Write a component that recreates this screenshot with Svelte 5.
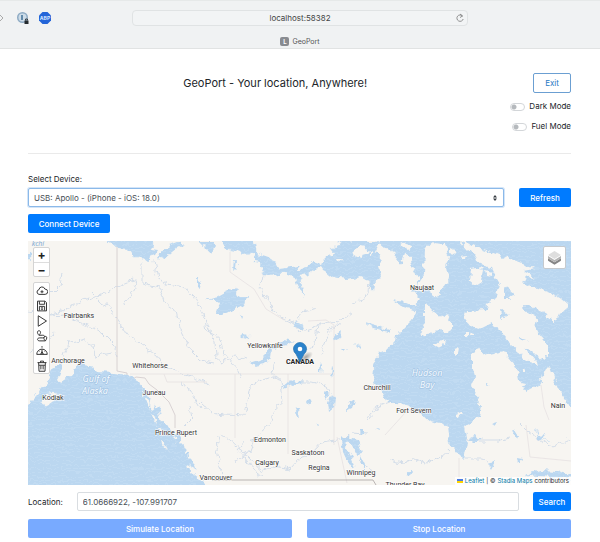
<script>
  let device = $state('apollo');
  let location = $state('61.0666922, -107.991707');
  let address = $state('localhost:58382');
  let dark = $state(false);
  let fuel = $state(false);

  const places = [
    ['Fairbanks', 79, 318], ['Anchorage', 68, 363], ['Whitehorse', 150, 368],
    ['Kodiak', 53, 400], ['Juneau', 154, 395], ['Prince Rupert', 176, 435],
    ['Yellowknife', 265, 348], ['Edmonton', 270, 442], ['Saskatoon', 308, 455],
    ['Calgary', 267, 465], ['Regina', 319, 470], ['Winnipeg', 361, 475],
    ['Vancouver', 216, 480], ['Churchill', 377, 390], ['Naujaat', 422, 290],
    ['Fort Severn', 414, 413], ['Nain', 558, 408], ['Thunder Bay', 405, 487]
  ];

  const rivers = [
    'M28 312l20 3 14-4 18-10 24-7 16-9 14-6q6 2-2 13l-8 12',
    'M50 315l14-1 12 7 12 4 14 8 12 12 3 12',
    'M92 293l8 9 9 5 10 14 6 12 15 10 14 11 12 14 18 6 26 10',
    'M62 272l-2 14-8 8M30 352l12-4 12-17M64 356l5-14 15-2 10 6 2 10 16-3',
    'M154 261l4 17 8 6 18 3 10 9 10 19 3 15 13 8 3 14 14 17 4 9',
    'M142 262v22l18 4 4 14 12 8 4 18 12 24 8 8 14 3',
    'M201 315l8 10 6 18 1 14 6 5 12-6 14 4',
    'M263 274l-3 15 8 10 8 15 18 10 4 9 30-12 11 1 13-10',
    'M295 323l9-11 13-4M352 303l12-3 4-7 1-14M275 362l-4 10 10 8 2 22-8 6-6 18-14 12-6 16-16 8',
    'M200 402l14 13 12-1 18 1 6-28 13-8 12-2 6 4',
    'M244 452l10 12 8 7 12-5 16 3 10-11 9-2 12-14 24-3 6-6 17 1',
    'M219 435l-2 14 5 28M221 434l18 14 16 24 8 5M245 440l-8 10 11 12',
    'M318 324l-2 20-12 7M320 354l9-23 7-6 6 1M366 420l8-9 2-4 14-5',
    'M388 460l16 3 12-4 9 4 15-5 9-8M463 438l15 3 20 0 12-3M465 459h18l6 3',
    'M288 382l24 0 12 3 6 10 1 14M520 424l6 6 10 8 18 10 12-8 5 1',
    'M180 383l8 5 12 20M182 428l10-10-2-10M360 462l10 6 5 10'
  ];

  const lakes = [
    'M206 299l12-3 7-4 13-5-3 6 5 3 8 0-2 9-7 4-4-3-4 5-7 4-9 0 1-7 5-4-7-4z',
    'M249 363l13-4 5-9 8-5 10-5 11 2-15 3-9 5-1 8-5 6-12 2z',
    'M281 389l7-6 6-3 9 2-10 3-7 2z', 'M332 393l3 5-1 9-5 4-1-8z', 'M324 391l4 4-1 4-3-3z',
    'M305 402l5-2 1 3-5 1z', 'M294 410l4-1 1 10-3-4z', 'M348 405l8-5-2 7-6 3z', 'M316 424l3-1-2 5z',
    'M296 322l7 3 2 4-10-2z', 'M240 311l3 5-1 2z', 'M241 333l6 2 3 4-8-2z', 'M334 337l7-5-1 6-5 4z',
    'M341 349l7-1-4 4zM354 343l5 2 0 3z', 'M365 322l10 3 15 5-2 2-15-4z', 'M235 260l2 0-1 8-2 2z',
    'M340 436l5 3 3-3 4 2 6 1 4 15-5 1-5-9-4-5-1 9 5 9 3 9-6-4-6-13z', 'M361 456l4 8 0 5-4-6z',
    'M197 278l4 6-1 5-3-2z', 'M205 297l4 2-3 1z', 'M407 471l4 0-1 6-3-1z',
    'M470 438l7-3-1 4 7 0-8 4zM487 383l4 2-4 1zM492 424l7-2-4 4z', 'M512 430l7 5-2 5-4-6z',
    'M517 457l5 1-2 6-2-1zM490 461l6-1-5 9z', 'M525 475l16-5 16 1 14 4v5l-20-3z',
    'M536 427l3 8 6-1-3 5 10 2-14-1z', 'M360 429l3 0 0 5-2 1z', 'M376 429l4-2 0 3z',
    'M320 362l2 4-1 7-2-4z', 'M332 367l2 7-1 4-2-3z', 'M28 252l4 3-2 4-2-1z'
  ];

  const islands = [
    'M425 249l8-6 12 1 4 13-3 10 3 12-8 12-4 6-10-7-13 1 10-16z',
    'M425 302l7 9 12 6 3-1 6 9 0 4-7 4-4-3-10 1-5 6-6-4 4-15z',
    'M435 345l6-5 4 1-3 5-6 3zM455 349l4-2-1 7-3 2z',
    'M472 269l8-2 4 4-2 10-6 4-5-4zM486 271l6 2 0 3-5-1z',
    'M459 240l9 10 7 5 5 9 11 3 6 13 3 5-3 10-10 10-2 5-14 1-5 0-1 7 6 8 9 3 10-5 9 5 7 9 4 8 14 12 14 9-1-5-13-15 15 9 8 2 0-14-8-10-4-9 2-6-12-7-1-8 11 4 8 3 5 7 7 5 2-7 7-4 4-7-8-7-10-5-8-3-10-4-8-3 2-5 8-2-10-5 11-2-8-4z',
    'M465 332l4 0 0 4-4 0zM471 331l3 1-1 3-3 0z',
    'M400 245l8-2 5 3-4 3zM450 248l7 4-3 3-4-1zM460 256l6-1-1 4-4 0z',
    'M538 344l4 1 0 4-3 0zM537 353l4 2-2 3zM521 368l3 0-1 4-2 0z',
    'M458 413l4-2 0 3-4 5zM446 445l5 1 0 3-5-1z', 'M541 372l2 7-3 2z'
  ];

  const tools = [
    ['Load', 'M4 12.500a3.200 3.200 0 0 1 0-6.300 4 4 0 0 1 7.800-.8 3.400 3.400 0 0 1 .4 7.100zM8 7v4M6 9h4'],
    ['Save', 'M2 1.500h10l2 2v11H2zM4.500 1.700v4h7v-4M4.500 14V8.500h7V14M6.500 10.500h3M6.500 12.300h3'],
    ['Play', 'M3 1L14 8 3 15z'],
    ['Route', 'M4 7C1 4 1.500 1 4 1s3 3 0 6zM4 7h5c3.500 0 3.500 3.500 0 3.500H5c-4 0-4 4 0 4h7.500M12.500 14.500c-3-3-2.500-6 0-6s2.500 3 0 6z'],
    ['Speed', 'M1 12.500a7 7 0 0 1 14 0zM8 12.500V6M8 3.500v-2M3.500 7.500l1 1M12.500 7.500l-1 1M6 12.500l2-3.500 2 3.500'],
    ['Delete', 'M2 3.500h12M6 3.500v-2h4v2M3.500 3.500L4 15h8l.5-11.500M4 7h8M6.500 7.500v5M9.500 7.500v5']
  ];
</script>

<div class="window">
  <header class="chrome">
    <div class="extensions">
      <svg class="arrow" viewBox="0 0 4 8" aria-hidden="true"><path d="M0 1l3 3-3 3" /></svg>
      <svg class="ext" viewBox="0 0 14 14" aria-hidden="true">
        <circle cx="6.500" cy="6.500" r="5.500" fill="#8eabc4" />
        <circle cx="6.500" cy="6.500" r="4" fill="#cddce8" />
        <path d="M5 4h2v5H5z" fill="#628bab" />
        <path d="M8.500 9.500h4v3.500h-4z" fill="#242a2e" /><path d="M9.500 9.500V8h2v1.500" fill="none" stroke="#242a2e" stroke-width=".8" />
      </svg>
      <svg class="ext" viewBox="0 0 14 14" aria-hidden="true">
        <path d="M4.500 1h5L13 4.500v5L9.500 13h-5L1 9.500v-5z" fill="#2465d8" />
        <text x="7" y="9" text-anchor="middle" font-size="5" font-weight="700" fill="#d9e8ff">ABP</text>
      </svg>
    </div>
    <div class="address">
      <input aria-label="Address" bind:value={address} />
      <button class="reload" aria-label="Reload">
        <svg viewBox="0 0 10 10"><path d="M7.500 3A3.200 3.200 0 1 0 8.200 6M5 1l2.500 2L5 4.500" /></svg>
      </button>
    </div>
    <div class="tab"><span class="favicon">L</span><span>GeoPort</span></div>
  </header>

  <main>
    <section class="top">
      <h1>GeoPort - Your location, Anywhere!</h1>
      <div class="options">
        <button class="outline">Exit</button>
        <label class="switch"><input type="checkbox" bind:checked={dark} />Dark Mode</label>
        <label class="switch"><input type="checkbox" bind:checked={fuel} />Fuel Mode</label>
      </div>
    </section>

    <label class="caption" for="device">Select Device:</label>
    <div class="device-row">
      <div class="select">
        <select id="device" bind:value={device}>
          <option value="apollo">USB: Apollo - (iPhone - iOS: 18.0)</option>
        </select>
        <svg viewBox="0 0 4 6" aria-hidden="true"><path d="M0 2.500L2 0l2 2.500zM0 3.500h4L2 6z" /></svg>
      </div>
      <button class="primary">Refresh</button>
    </div>
    <button class="primary connect">Connect Device</button>

    <section class="map" aria-label="Map">
      <svg class="canvas" viewBox="28 241 543 244" preserveAspectRatio="xMidYMid slice">
        <defs>
          <pattern id="sea" width="6" height="4" patternUnits="userSpaceOnUse">
            <path d="M0 0h6v4H0z" fill="#bbd7f0" /><path d="M0 0h6v1H0z" fill="#c1dbf2" />
          </pattern>
          <filter id="coast" filterUnits="userSpaceOnUse" x="20" y="233" width="560" height="260">
            <feTurbulence type="fractalNoise" baseFrequency="0.16" numOctaves="2" seed="4" />
            <feDisplacementMap in="SourceGraphic" scale="8" xChannelSelector="R" yChannelSelector="G" />
          </filter>
          <radialGradient id="shade"><stop offset="0" stop-color="#555" stop-opacity=".5" /><stop offset="1" stop-color="#555" stop-opacity="0" /></radialGradient>
        </defs>
        <path d="M28 241h543v244H28z" fill="#f7f5f1" />
        <g class="river" filter="url(#coast)">{#each rivers as d}<path {d} />{/each}</g>
        <g class="border">
          <path d="M117 241v130l10 2v10l9-6 9 1 4 6 8 6 12 12 6 13v13" />
          <path class="faint" d="M130 374h205M235 374v64M288 374v80M334 325v120M230 252v20l24 17 12 20 18 11M334 325l-8-5-18 1M164 374l3 8h40M459 458v27M337 437l10 46M385 435l20-22 22-11M541 385l3 22 5 13M526 425l4 32 41 4" />
          <path d="M212 480h161l3 5" stroke="#aaa5a5" />
        </g>
        <g filter="url(#coast)">
          <g fill="url(#sea)">
            <path d="M107 233v8l5 3 6 4 10 1 6 7 8 4 4 3 3-6 6-2 3-5-7-1 2-8v-8z" />
            <path d="M159 258l3-6 6-4 1-3 8-3 8 2-8 4-7 6-5 4-3-1-2 3zM196 233v8l18 0 2 5-5 7-4-2-2-7-3 2z" />
            <path d="M222 233v8l1 7 11 2 10 4 9-1 2 9 6 1 2 4-3 6 10 3 14-3 10 3 4 11 6 9-2-12-4-8 10-2 9-7 8 4 8 6 15 2 13-3 8 4 1 8 4 5 1-9 6-9-3-10 5-5-7-8 4-8-6-3-34-1-3 6-8 1 5 7-9 4-4 6-9-3-7 4-13 2-13 2-5-9-17-6-2-11v-8z" />
            <path d="M20 404h8l9-9 8-10 4-10 7-10 7 0-5 14 3 4 12-8 4-11 8 2 9 2 4 4 15 1 7 1 8 1 8 5 5 7 6 3 4 10 6 8 4 1-2 8 8 9 8 11 4-4 3 7-2 3 6 5 2 10 7 7 4 13 10 10 8 5v14H20z" />
            <path d="M377 233v8l8 7 7 1 4 7 4 10 4-12 6 2 3 12 5 10 0 6-6 6 8 8-3 9-12-5-12-2 8 6 14 4-2 10-8 8-9 7-1 7-8 7-9 4-5 14-1 15 9 5 7 15 9 0 13 4 9 7 10 8 11 2 7 3 2 17 8 10 7 7 3-17-3-15 15-12 2-10-3-10-7-10 4-10-3-10 0-14 7-3 10 6 15-3 12 14 2 9 1 5 8 11 6-3 6-3 8-15 3-3 8 22 14 19 7 11h9V233z" />
            {#each lakes as d}<path {d} />{/each}
          </g>
          <g fill="#f7f5f1">
            {#each islands as d}<path {d} />{/each}
            <path d="M297 266l12-6 4 3-5 4-10 3zM41 402l5-8 7-1 8 1-7 5-8 6zM187 464l10 6 12 10 0 4-9-4-11-9zM332 247l5-2-1 4zM338 258l4 0-2 4zM353 250l9-6 7 8-7 2 1 5-7-1zM370 253l3-2 0 4-3 2z" />
            <path d="M140 388l5 6-2 1zM145 396l4 3 0 9-3-5zM151 398l4 6-2 6-4-5zM151 412l4 5 2 8-5-6zM158 413l5 2 3 8-5 0zM158 428l6 2 0 6-5-2zM161 438l4 6 4 8-7-8zM172 436l5 2 0 5z" />
          </g>
          <path fill="url(#sea)" d="M504 286l4 3 7 5-7 5-4 0zM500 308l8 7-7 4 0-5zM425 295l7 3 4 6-6-1-5-4zM519 335l8 6-5-1z" />
        </g>
        <g class="sea-name">
          <text x="96" y="382">Gulf of</text><text x="95" y="394">Alaska</text>
          <text x="427" y="376">Hudson</text><text x="427" y="388">Bay</text>
          <text class="small" x="38" y="246">kchi</text>
        </g>
        <g class="place">
          {#each places as [name, x, y]}<text {x} {y}>{name}</text>{/each}
          <text class="country" x="300" y="364">CANADA</text>
        </g>
        <ellipse cx="306" cy="357" rx="8" ry="4" fill="url(#shade)" transform="rotate(-35 306 357)" />
        <path d="M300 362l-4-8q-2.500-2-2.500-5a6.500 6.500 0 0 1 13 0q0 3-2.500 5z" fill="#2b82cb" stroke="#2471af" stroke-width=".7" />
        <circle cx="300" cy="349" r="2.300" fill="#fff" />
      </svg>

      <div class="controls">
        <div class="bar zoom"><button aria-label="Zoom in">+</button><button aria-label="Zoom out">−</button></div>
        <div class="bar">
          {#each tools as [name, d]}
            <button aria-label={name}><svg viewBox="0 0 16 16"><path {d} /></svg></button>
          {/each}
        </div>
      </div>
      <button class="layers" aria-label="Layers">
        <svg viewBox="0 0 26 26">
          <path d="M5 14l8 5 8-5v3l-8 5-8-5z" fill="#858585" />
          <path d="M5 11l8 5 8-5v3l-8 5-8-5z" fill="#b4b4b4" />
          <path d="M13 5l8 5-8 5-8-5z" fill="#dedede" />
        </svg>
      </button>
      <div class="credit">
        <svg viewBox="0 0 6 4" aria-hidden="true"><path d="M0 0h6v2H0z" fill="#4c7be1" /><path d="M0 2h6v2H0z" fill="#ffd500" /></svg>
        <a href="#leaflet">Leaflet</a> | © <a href="#stadia">Stadia Maps</a> contributors
      </div>
    </section>

    <div class="location-row">
      <label for="location">Location:</label>
      <input id="location" bind:value={location} />
      <button class="primary search">Search</button>
    </div>
    <div class="actions">
      <button class="primary" disabled>Simulate Location</button>
      <button class="primary" disabled>Stop Location</button>
    </div>
  </main>
</div>

<style>
  :global(body) { background: #fff; }
  .window { font: 8px/12px Inter, "Liberation Sans", sans-serif; color: #212529; }
  .window * { box-sizing: border-box; }
  button, input, select { font: inherit; color: inherit; margin: 0; }
  button { padding: 0; border: 0; background: none; cursor: pointer; }
  svg { display: block; }

  .chrome {
    display: grid; grid-template-columns: 1fr 56% 1fr; row-gap: 10px; align-items: center;
    padding-top: 9px; background: #f0f2f3; border-top: 1px solid #e6e9e9; border-bottom: 1px solid #e1e3e3;
  }
  .extensions { display: flex; align-items: center; gap: 8px; }
  .arrow { width: 4px; height: 8px; margin-right: 4px; fill: none; stroke: #aaa; }
  .ext { width: 14px; height: 14px; }
  .address { position: relative; }
  .address input {
    display: block; width: 100%; height: 16px; padding: 0 16px; text-align: center;
    border: 1px solid #e0e3e4; border-radius: 4px; background: #f2f4f5; color: #444; outline: 0;
  }
  .reload { position: absolute; right: 3px; top: 3px; width: 10px; height: 10px; }
  .reload svg { fill: none; stroke: #777; stroke-width: 0.8; }
  .tab { grid-column: 1 / -1; display: flex; justify-content: center; gap: 3px; font-size: 7px; color: #555; }
  .favicon { width: 9px; height: 9px; margin-top: 1px; border-radius: 2px; background: #888b90; color: #fff; font: 700 6px/9px Inter, sans-serif; text-align: center; }

  main { padding: 24px 29px 0 28px; }
  .top { display: flex; align-items: flex-start; padding-bottom: 20px; border-bottom: 1px solid #eaeaea; }
  h1 { flex: 1; margin: 0; padding-left: 12px; font-size: 11px; line-height: 20px; font-weight: 400; text-align: center; }
  .options { display: flex; flex-direction: column; align-items: flex-end; gap: 7px; }
  .outline { width: 38px; height: 20px; border: 1px solid #6b9fd2; border-radius: 2px; color: #287ac4; }
  .switch { display: flex; align-items: center; gap: 4px; line-height: 13px; }
  .switch input { appearance: none; width: 15px; height: 8px; border: 1px solid #d3d6d9; border-radius: 4px; background: radial-gradient(circle at 3px 3px, #b5b9bd 2px, #fff 3px); }
  .switch input:checked { background: #007bff; }

  .caption { display: block; margin: 19px 0 3px; }
  .device-row { display: flex; gap: 15px; }
  .select { position: relative; flex: 1; }
  select {
    appearance: none; display: block; width: 100%; height: 19px; padding: 0 5px; border: 1px solid #8bb9e9;
    border-radius: 2px; background: #fff; color: #495057; box-shadow: 0 0 0 1px #d4e5f8; outline: 0;
  }
  .select svg { position: absolute; right: 7px; top: 7px; width: 4px; height: 6px; fill: #343a40; pointer-events: none; }
  .primary { width: 52px; height: 19px; border-radius: 2px; background: #007bff; color: #fff; font-weight: 500; }
  .connect { display: block; width: 82px; margin: 7px 0 8px; }

  .map { position: relative; height: 244px; overflow: hidden; }
  .canvas { width: 100%; height: 100%; }
  .river { fill: none; stroke: #d3dde9; stroke-width: 1; stroke-linejoin: round; }
  .border { fill: none; stroke: #d1c9cc; stroke-width: 0.8; }
  .border .faint { stroke: #e6e1e2; }
  .place text { font: 7px Roboto, sans-serif; text-anchor: middle; fill: #333; stroke: #fff; stroke-width: 1px; paint-order: stroke; }
  .place .country { font-weight: 700; fill: #222; }
  .sea-name text { font: italic 9px "Noto Sans", sans-serif; text-anchor: middle; fill: #f6fbff; stroke: #9cc0e2; stroke-width: 1px; paint-order: stroke; }
  .sea-name .small { font-size: 7px; fill: #7fa9d2; stroke: #f7f5f1; }
  .controls { position: absolute; left: 5px; top: 6px; display: flex; flex-direction: column; gap: 5px; }
  .bar { width: 17px; display: flex; flex-direction: column; border: 1px solid #d4d4d4; border-radius: 2px; background: #fff; }
  .bar button { display: grid; place-items: center; height: 15px; color: #222; }
  .bar svg { width: 12px; height: 12px; fill: none; stroke: #333; stroke-width: 1.300; stroke-linejoin: round; }
  .zoom button { height: 14px; font-size: 12px; font-weight: 700; line-height: 14px; }
  .zoom button + button { border-top: 1px solid #ddd; }
  .layers { position: absolute; right: 5px; top: 5px; width: 23px; height: 23px; border: 1px solid #c6cace; border-radius: 2px; background: #fff; }
  .layers svg { width: 100%; height: 100%; }
  .credit { position: absolute; right: 0; bottom: 0; display: flex; align-items: center; gap: 2px; padding: 0 2px; background: #fffc; font-size: 6px; line-height: 8px; white-space: nowrap; }
  .credit svg { width: 6px; height: 4px; }
  .credit a { color: #0078a8; text-decoration: none; }

  .location-row { display: flex; align-items: center; margin: 7px 0 8px; gap: 14px; }
  .location-row input { flex: 1; min-width: 0; height: 19px; padding: 0 5px; border: 1px solid #d9dde1; border-radius: 2px; background: #fff; color: #495057; outline: 0; }
  .search { width: 38px; }
  .actions { display: flex; gap: 15px; padding-bottom: 4px; }
  .actions button { flex: 1; background: #78aaff; cursor: default; }
</style>
